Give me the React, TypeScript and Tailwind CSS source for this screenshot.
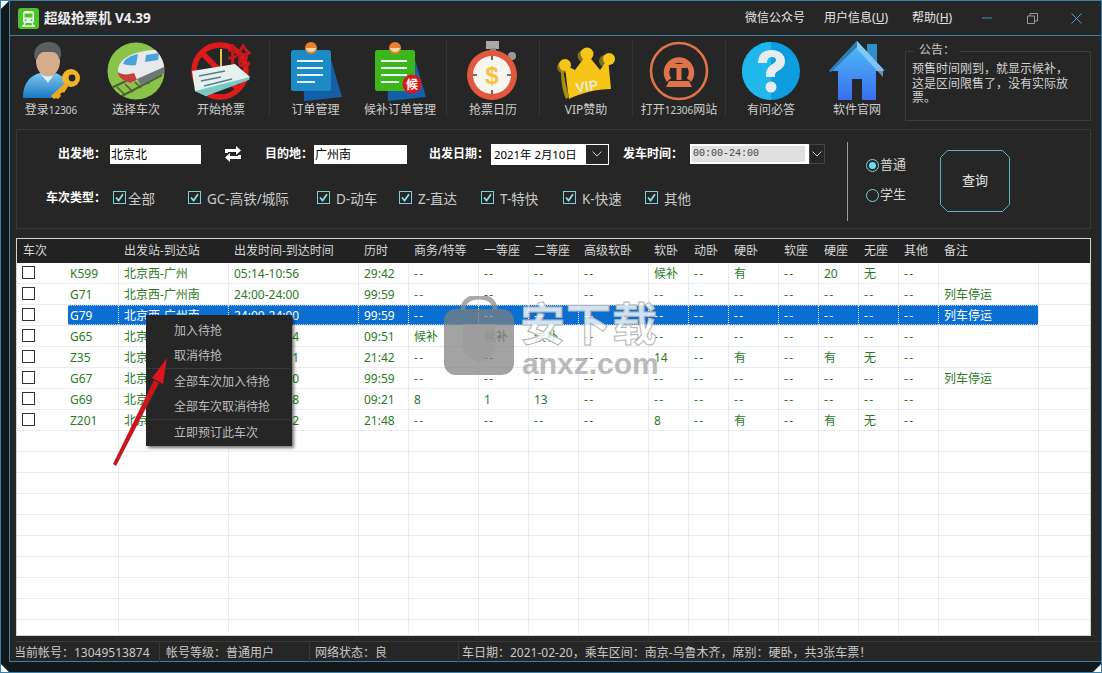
import { useId } from "react";

const cols = "grid grid-cols-[51px_50px_110px_130px_50px_70px_50px_50px_70px_40px_40px_50px_40px_40px_40px_40px_100px_52px]";

const headers = ["车次", "", "出发站-到达站", "出发时间-到达时间", "历时", "商务/特等", "一等座", "二等座", "高级软卧", "软卧", "动卧", "硬卧", "软座", "硬座", "无座", "其他", "备注", ""];

const d = "--";
const rows = [
  ["K599", "北京西-广州", "05:14-10:56", "29:42", d, d, d, d, "候补", d, "有", d, "20", "无", d, ""],
  ["G71", "北京西-广州南", "24:00-24:00", "99:59", d, d, d, d, d, d, d, d, d, d, d, "列车停运"],
  ["G79", "北京西-广州南", "24:00-24:00", "99:59", d, d, d, d, d, d, d, d, d, d, d, "列车停运"],
  ["G65", "北京西-广州南", "09:33-19:24", "09:51", "候补", "候补", "候补", d, d, d, d, d, d, d, d, ""],
  ["Z35", "北京西-广州", "11:49-09:31", "21:42", d, d, d, d, "14", d, "有", d, "有", "无", d, ""],
  ["G67", "北京西-广州南", "24:00-24:00", "99:59", d, d, d, d, d, d, d, d, d, d, d, "列车停运"],
  ["G69", "北京西-广州南", "10:07-19:28", "09:21", "8", "1", "13", d, d, d, d, d, d, d, d, ""],
  ["Z201", "北京西-广州", "13:54-11:42", "21:48", d, d, d, d, "8", d, "有", d, "有", "无", d, ""],
];

function Title() {
  return (
    <svg width="21" height="21" viewBox="0 0 21 21">
      <rect width="21" height="21" rx="3" fill="#4cc32c" />
      <rect x="5" y="3" width="11" height="12" rx="2.5" fill="#eef8e8" />
      <rect x="6.5" y="5.5" width="8" height="4" fill="#4cc32c" />
      <circle cx="7.5" cy="12.3" r="1" fill="#4cc32c" />
      <circle cx="13.5" cy="12.3" r="1" fill="#4cc32c" />
      <path d="M4 18h13M7 15l-1.5 3M14 15l1.5 3" stroke="#eef8e8" strokeWidth="1.4" fill="none" />
    </svg>
  );
}

function UserKey() {
  const id = useId();
  return (
    <svg width="60" height="60" viewBox="0 0 60 60">
      <defs>
        <linearGradient id={id} x1="0" y1="0" x2="0" y2="1">
          <stop offset="0" stopColor="#7cc8ee" />
          <stop offset="1" stopColor="#1a78c2" />
        </linearGradient>
      </defs>
      <path d="M2 57c0-14 6-22 17-25l8 6 8-6c5 2 8 5 11 9l-12 13-3 3H5z" fill={`url(#${id})`} />
      <path d="M19 32l8 10 7-10-2-3H21z" fill="#dff1fb" />
      <ellipse cx="27" cy="20" rx="12" ry="15.500" fill="#d3ad8c" />
      <path d="M14 18C11 7 19 1 28 1c8 0 13 5 12 14l-2 4c0-5-3-8-7-8H22c-3 1-5 3-6 7z" fill="#5b5f5f" />
      <circle cx="50" cy="37" r="9" fill="#f0b429" />
      <circle cx="51" cy="37" r="3.400" fill="#262626" />
      <path d="M44 42L30 55l3 3 2-1 2 1 3-3-1-2 3-2 1 1 5-8z" fill="#eaa91f" />
    </svg>
  );
}

function TrainIcon() {
  const id = useId();
  return (
    <svg width="60" height="60" viewBox="0 0 60 60">
      <defs>
        <clipPath id={id}>
          <circle cx="30" cy="30" r="28.500" />
        </clipPath>
      </defs>
      <circle cx="30" cy="30" r="28.500" fill="#8bc34a" />
      <g clipPath={`url(#${id})`}>
        <path d="M5 47L40 31M14 56l42-22" stroke="#4f5f35" strokeWidth="2" fill="none" />
        <path d="M11 46l8 8M19 43l8 8M27 39l8 8M35 35l8 8" stroke="#4f5f35" strokeWidth="1.600" />
        <path d="M12 30c0-9 8-15 18-18 9-3 21-4 30-3v18L34 38l-8 4c-8-2-14-6-14-12z" fill="#e7e9ea" />
        <path d="M12 31c3 3 11 3 16 1l3 7-6 3c-7-2-13-5-13-11z" fill="#c73f3a" />
        <path d="M19 19c3-3 8-5 13-6l-2 11c-4 1-9 0-13-1z" fill="#4aa3d8" />
        <path d="M40 14l13-2-1 7-13 2z" fill="#4aa3d8" />
        <path d="M31 38l29-13v6L35 44z" fill="#6f767a" />
      </g>
    </svg>
  );
}

function TicketIcon() {
  return (
    <svg width="60" height="60" viewBox="0 0 60 60">
      <circle cx="29" cy="30" r="26" fill="none" stroke="#e01a1a" strokeWidth="5.500" />
      <path d="M11 12l36 36" stroke="#e01a1a" strokeWidth="5.500" />
      <path d="M30 8v24h11" stroke="#e8c24a" strokeWidth="2" fill="none" />
      <text x="36" y="24" fontSize="24" fontWeight="700" fill="#c8161d" fontFamily="'Noto Sans CJK SC', sans-serif">抢</text>
      <path d="M1 30L44 23l15 13-44 19-11-5z" fill="#e6f1ef" />
      <path d="M4 50L59 36l-1 3-43 16z" fill="#79c8c4" />
      <path d="M8 35l26-5M10 40l20-4M13 45l28-7" stroke="#5a7d86" strokeWidth="1.500" />
    </svg>
  );
}

function NoteIcon({ green }: { green?: boolean }) {
  return (
    <svg width="54" height="60" viewBox="0 0 54 60">
      <path d="M14 20L40 12l13 44-38 4z" fill="#155fa8" />
      <rect x="2" y="9" width="40" height="41" rx="2.500" fill={green ? "#3fb51c" : "#1c8ac6"} />
      <circle cx="22" cy="7" r="6" fill="#e8802f" />
      <path d="M17 7a5 4 0 0 0 10 0" fill="#f4d9a6" />
      <path d="M8 20h26M8 27h26M8 34h26M8 41h18" stroke="#e6f4fb" strokeWidth="2" />
      {green && (
        <>
          <circle cx="39" cy="43" r="9.500" fill="#e0161c" />
          <text x="39" y="47.500" textAnchor="middle" fontSize="12" fontWeight="700" fill="#fff" fontFamily="'Noto Sans CJK SC', sans-serif">候</text>
        </>
      )}
    </svg>
  );
}

function WatchIcon() {
  return (
    <svg width="54" height="60" viewBox="0 0 54 60">
      <rect x="20" y="0" width="13" height="8" fill="#a9a9a9" />
      <rect x="24" y="7" width="6" height="5" fill="#8a8a8a" />
      <circle cx="46" cy="15" r="4" fill="#9a9a9a" />
      <circle cx="26" cy="34" r="25" fill="#e2583e" />
      <circle cx="26" cy="34" r="19" fill="#f7f5f0" />
      <path d="M26 15v4M26 49v4M7 34h4M41 34h4" stroke="#444" strokeWidth="1.600" />
      <text x="26" y="42.500" textAnchor="middle" fontSize="24" fontWeight="700" fill="#f4c23c" fontFamily="'Liberation Sans', sans-serif">$</text>
    </svg>
  );
}

function CrownIcon() {
  return (
    <svg width="60" height="60" viewBox="0 0 60 60">
      <g fill="#7d7020" transform="translate(-3 2)">
        <circle cx="10" cy="24" r="6" />
        <circle cx="31" cy="13" r="6.500" />
        <circle cx="52" cy="18" r="6" />
      </g>
      <path d="M9 24l10 5 12-16 13 16 8-11 3 30c-14 0-30 4-42 10-2-12-3-24-4-34z" fill="#f5c518" />
      <path d="M7 26c1 10 3 20 6 30l-3 2c-4-9-5-20-5-30z" fill="#a88f14" />
      <circle cx="9" cy="24" r="6" fill="#f5c518" />
      <circle cx="31" cy="13" r="6.500" fill="#f5c518" />
      <circle cx="53" cy="18" r="6" fill="#f5c518" />
      <text x="31" y="50" textAnchor="middle" fontSize="14" fontWeight="700" fill="#ece7d6" transform="rotate(-8 31 46)" fontFamily="'Liberation Sans', sans-serif">VIP</text>
    </svg>
  );
}

function RailIcon() {
  return (
    <svg width="60" height="60" viewBox="0 0 60 60">
      <circle cx="30" cy="30" r="28" fill="none" stroke="#e07349" strokeWidth="2.600" />
      <path d="M20 39a12.500 12.500 0 1 1 20 0" fill="none" stroke="#e07349" strokeWidth="5.500" />
      <path d="M22 23h16v4h-5.500v12h-5V27H22z" fill="#e07349" />
      <path d="M20 40h20l3 6H17z" fill="#e07349" />
    </svg>
  );
}

function HelpIcon() {
  return (
    <svg width="60" height="60" viewBox="0 0 60 60">
      <circle cx="30" cy="30" r="29" fill="#0d9ee0" />
      <path d="M30 1a29 29 0 0 0 0 58z" fill="#1fb8ea" />
      <path d="M17 22c0-9 6-13 14-13s13 5 13 11c0 5-3 8-7 10-3 2-3 3-3 6h-9c0-6 1-9 5-12 3-2 5-3 5-5s-2-3-4-3c-3 0-5 2-5 6z" fill="#e9ecef" />
      <circle cx="30" cy="46" r="5.500" fill="#e9ecef" />
    </svg>
  );
}

function HomeIcon() {
  const id = useId();
  return (
    <svg width="60" height="60" viewBox="0 0 60 60">
      <defs>
        <linearGradient id={id} x1="0" y1="0" x2="0" y2="1">
          <stop offset="0" stopColor="#4fc0f5" />
          <stop offset="1" stopColor="#3a6df0" />
        </linearGradient>
      </defs>
      <rect x="40" y="3" width="10" height="18" fill="#2f8fc7" />
      <path d="M30 0L2 30h9v29h14V38h10v21h14V30h9z" fill={`url(#${id})`} />
      <path d="M30 0L2 30l2 1L30 6z" fill="#2a7db5" />
      <path d="M30 0l26 28v8L30 8z" fill="#a7d9f5" opacity=".6" />
    </svg>
  );
}

const tools = [
  { label: <>登录<span className="text-[10px]">12306</span></>, icon: <UserKey />, w: "w-[82px]" },
  { label: "选择车次", icon: <TrainIcon />, w: "w-[88px]" },
  { label: "开始抢票", icon: <TicketIcon />, w: "w-[82px] mr-[7px]" },
  { label: "订单管理", icon: <NoteIcon />, w: "w-[91px]", sep: true },
  { label: "候补订单管理", icon: <NoteIcon green />, w: "w-[78px] mr-[7px]" },
  { label: "抢票日历", icon: <WatchIcon />, w: "w-[92px]", sep: true },
  { label: "VIP赞助", icon: <CrownIcon />, w: "w-[92px]", sep: true },
  { label: <>打开<span className="text-[10px]">12306</span>网站</>, icon: <RailIcon />, w: "w-[92px]", sep: true },
  { label: "有问必答", icon: <HelpIcon />, w: "w-[90px]", sep: true },
  { label: "软件官网", icon: <HomeIcon />, w: "w-[82px]" },
];

const types = [
  { label: "全部", w: "w-[75px]", gap: "gap-[2px]" },
  { label: "GC-高铁/城际", w: "w-[129px]", gap: "gap-[6px]" },
  { label: "D-动车", w: "w-[82px]", gap: "gap-[6px]" },
  { label: "Z-直达", w: "w-[82px]", gap: "gap-[6px]" },
  { label: "T-特快", w: "w-[82px]", gap: "gap-[6px]" },
  { label: "K-快速", w: "w-[82px]", gap: "gap-[6px]" },
  { label: "其他", w: "w-[60px]", gap: "gap-[6px]" },
];

function Check() {
  return (
    <svg width="13" height="13" viewBox="0 0 13 13" className="shrink-0">
      <rect x="0.5" y="0.5" width="12" height="12" fill="#262626" stroke="#7fd0d4" />
      <path d="M3 6.5l2.600 3L10 3.200" fill="none" stroke="#8fdde2" strokeWidth="1.800" />
    </svg>
  );
}

function Chevron() {
  return (
    <svg width="10" height="6" viewBox="0 0 10 6">
      <path d="M0.500 0.500L5 5l4.500-4.500" fill="none" stroke="#cfcfcf" />
    </svg>
  );
}

function Row({ data, selected }: { data?: string[]; selected?: boolean }) {
  const cells: string[] = data ? data : Array(16).fill("");
  return (
    <div className={`${cols} h-[21px] text-xs leading-[21px] border-b border-[#e9ebee]`}>
      <div className="flex items-start pl-[5px] pt-[3px]">
        {data && <span className="w-[13px] h-[13px] border border-[#333] bg-white" />}
      </div>
      {cells.map((c, i) => (
        <div
          key={i}
          className={`truncate ${i === 0 ? "pl-[2px]" : "pl-[5px] border-l"} ${c === d ? "tracking-[1.5px]" : ""} ${
            selected
              ? "bg-[#0a6fd0] text-white border-l-[#e8f0f8] border-y border-dotted border-y-[#a8cbee] leading-[19px]"
              : "text-[#2c7a1f] border-[#e9ebee]"
          }`}
        >
          {c}
        </div>
      ))}
      <div className="border-l border-[#e9ebee]" />
    </div>
  );
}

export default function App() {
  return (
    <div className="relative w-[1102px] h-[673px] overflow-hidden border border-[#3d7ea6] bg-[#13181b] font-['Noto_Sans','Noto_Sans_CJK_SC',sans-serif]">
      <div className="ml-[8px] mb-[9px] h-[661px] flex flex-col border-l border-b border-[#3d7ea6] bg-[#262626]">
        {/* Title bar */}
        <div className="h-[35px] shrink-0 flex items-center border-b border-[#3d7ea6] pl-[8px] text-[#e4e4e4]">
          <Title />
          <span className="ml-[5px] w-[106px] whitespace-nowrap text-[13.5px] font-bold text-[#eeeeee]">超级抢票机 V4.39</span>
          <span className="ml-[595px] text-xs">微信公众号</span>
          <span className="ml-[19px] text-xs">
            用户信息(<span className="underline">U</span>)
          </span>
          <span className="ml-[24px] text-xs">
            帮助(<span className="underline">H</span>)
          </span>
          <svg width="10" height="10" viewBox="0 0 10 10" className="ml-[30px]">
            <path d="M0 5h10" stroke="#4f8fae" />
          </svg>
          <svg width="11" height="11" viewBox="0 0 11 11" className="ml-[35px]">
            <path d="M0.500 3h7v7.500h-7zM3 3V0.500h7.500V8H7.500" fill="none" stroke="#9a9a9a" />
          </svg>
          <svg width="11" height="11" viewBox="0 0 11 11" className="ml-[33px]">
            <path d="M0.500 0.500l10 10M10.500 0.500l-10 10" stroke="#5d9abb" />
          </svg>
        </div>

        {/* Toolbar */}
        <div className="h-[93px] shrink-0 flex items-start">
          {tools.map((t, i) => (
            <div key={i} className="flex items-start">
              {t.sep && <div className="w-px h-[77px] mt-[4px] bg-[#343434]" />}
              <div className={`${t.w} flex flex-col items-center pt-[5px]`}>
                <div className="h-[60px] flex items-center justify-center">{t.icon}</div>
                <span className="mt-[2px] text-xs leading-[14px] text-[#cdcdcd] whitespace-nowrap">{t.label}</span>
              </div>
            </div>
          ))}
          <div className="relative ml-[7px] mt-[15px] w-[186px] h-[70px] border border-[#3c3c3c] pl-[6px] pt-[10px] text-xs leading-[14.5px] text-[#d2d2d2] whitespace-nowrap">
            <span className="absolute left-[8px] -top-[9px] bg-[#262626] px-[5px] text-[#c8c8c8]">公告：</span>
            预售时间刚到，就显示候补，
            <br />
            这是区间限售了，没有实际放
            <br />
            票。
          </div>
        </div>

        {/* Search panel */}
        <div className="ml-[6px] w-[1075px] h-[100px] shrink-0 flex border border-[#3a3a3a]">
          <div className="w-[830px] shrink-0 pt-[14px] text-xs">
            <div className="flex items-center h-[20px]">
              <span className="ml-[41px] w-[52px] font-bold text-white">出发地：</span>
              <span className="w-[91px] h-[19px] bg-white text-black leading-[19px] pl-[1px]">北京北</span>
              <svg width="20" height="20" viewBox="0 0 20 20" className="ml-[22px]">
                <path d="M2 9V5h11V2l5 4.500-5 4.500V8H5v1zM18 11v4H7v3l-5-4.500L7 9v3h8v-1z" fill="#fff" />
              </svg>
              <span className="ml-[22px] w-[49px] font-bold text-white whitespace-nowrap">目的地：</span>
              <span className="w-[93px] h-[19px] bg-white text-black leading-[19px] pl-[1px]">广州南</span>
              <span className="ml-[22px] w-[62px] font-bold text-white whitespace-nowrap">出发日期：</span>
              <div className="w-[118px] h-[21px] flex border border-white">
                <span className="flex-1 bg-white text-black text-[11.4px] leading-[19px] pl-[2px] whitespace-nowrap">2021年 2月10日</span>
                <span className="w-[22px] flex items-center justify-center">
                  <Chevron />
                </span>
              </div>
              <span className="ml-[14px] w-[67px] font-bold text-white whitespace-nowrap">发车时间：</span>
              <div className="w-[135px] h-[20px] flex">
                <div className="w-[119px] bg-white p-[2px] pr-[4px]">
                  <div className="h-full bg-[#e0e0e0] text-[#444] text-[10px] leading-[16px] pl-[1px] font-['Liberation_Mono',monospace]">00:00-24:00</div>
                </div>
                <span className="flex-1 flex items-center justify-center border border-[#444]">
                  <Chevron />
                </span>
              </div>
            </div>
            <div className="flex items-center h-[20px] mt-[24px]">
              <span className="ml-[29px] w-[67px] font-bold text-white whitespace-nowrap">车次类型：</span>
              {types.map((t) => (
                <div key={t.label} className={`${t.w} ${t.gap} flex items-center text-[13.5px] text-[#c9c9c9]`}>
                  <Check />
                  <span className="whitespace-nowrap mt-[2px]">{t.label}</span>
                </div>
              ))}
            </div>
          </div>
          <div className="w-px h-[79px] mt-[12px] bg-[#9a9a9a]" />
          <div className="ml-[18px] w-[74px] pt-[27px] flex flex-col gap-[14px] text-[13px] text-[#d8d8d8]">
            <div className="h-[16px] flex items-center gap-px">
              <span className="w-[13px] h-[13px] rounded-full border border-[#7fd0d4] flex items-center justify-center">
                <span className="w-[7px] h-[7px] rounded-full bg-[#6fdcf2]" />
              </span>
              普通
            </div>
            <div className="h-[16px] flex items-center gap-px">
              <span className="w-[13px] h-[13px] rounded-full border border-[#7fd0d4]" />
              学生
            </div>
          </div>
          <div className="relative mt-[20px] w-[70px] h-[62px] flex items-center justify-center text-[13px] text-[#e6e6e6]">
            <svg width="70" height="62" viewBox="0 0 70 62" className="absolute inset-0">
              <path d="M7.500 0.500h55l7 7v47l-7 7h-55l-7-7v-47z" fill="none" stroke="#5fb5ba" />
            </svg>
            查询
          </div>
        </div>

        {/* Train table */}
        <div className="relative ml-[6px] mt-[9px] w-[1075px] h-[398px] shrink-0 overflow-hidden border border-[#d4d4d4] bg-white">
          <div className={`${cols} h-[24px] bg-[#222222] text-xs leading-[24px] text-[#d6d6d6]`}>
            {headers.map((h, i) => (
              <div key={i} className="whitespace-nowrap pl-[6px]">
                {h}
              </div>
            ))}
          </div>
          {rows.map((r, i) => (
            <Row key={i} data={r} selected={i === 2} />
          ))}
          {Array.from({ length: 10 }).map((_, i) => (
            <Row key={i} />
          ))}
        </div>

        {/* Status bar */}
        <div className="ml-[6px] mt-[5px] h-[21px] flex text-xs leading-[21px] text-[#c8c8c8] border-t border-[#3a3a3a]">
          <div className="w-[144px] overflow-hidden whitespace-nowrap border-r border-[#3a3a3a]">
            <span className="-ml-[2px] inline-block">当前帐号：13049513874</span>
          </div>
          <div className="w-[150px] pl-[6px] whitespace-nowrap border-r border-[#3a3a3a]">帐号等级：普通用户</div>
          <div className="w-[149px] pl-[5px] whitespace-nowrap border-r border-[#3a3a3a]">网络状态：良</div>
          <div className="flex-1 overflow-hidden whitespace-nowrap pl-[3px]">
            <span className="inline-block">车日期：2021-02-20，乘车区间：南京-乌鲁木齐，席别：硬卧，共3张车票！</span>
          </div>
        </div>
      </div>

      {/* Context menu */}
      <div className="absolute left-[145px] top-[314px] w-[146px] h-[131px] bg-[#262626] shadow-[2px_2px_3px_rgba(0,0,0,0.55)] text-xs text-[#bdbdbd] pl-[28px] pt-[3px]">
        <div className="h-[25px] leading-[25px]">加入待抢</div>
        <div className="h-[25px] leading-[25px]">取消待抢</div>
        <div className="-ml-[26px] w-[142px] h-px bg-[#3a3a3a]" />
        <div className="h-[25px] leading-[25px]">全部车次加入待抢</div>
        <div className="h-[25px] leading-[25px]">全部车次取消待抢</div>
        <div className="-ml-[26px] w-[142px] h-px bg-[#3a3a3a]" />
        <div className="h-[25px] leading-[25px]">立即预订此车次</div>
      </div>

      {/* Red annotation arrow */}
      <svg width="70" height="120" viewBox="0 0 70 120" className="absolute left-[105px] top-[355px]">
        <path d="M7 108L10 110 53 27 48 24z" fill="#c8161d" />
        <path d="M61 2L46 22l11 6z" fill="#e0141c" />
      </svg>

      {/* Site watermark */}
      <div className="absolute left-[442px] top-[295px] w-[72px] h-[80px]">
        <svg width="72" height="80" viewBox="0 0 72 80">
          <path d="M20 14C20 4 28 1 36 1s16 3 16 13" fill="none" stroke="#8c8c8c" strokeOpacity=".75" strokeWidth="5" />
          <rect x="1" y="13" width="70" height="66" rx="12" fill="#808080" fillOpacity=".72" />
          <path d="M20 28h32v22c0 8-9 13-16 16-7-3-16-8-16-16z" fill="#9a9a9a" fillOpacity=".7" />
        </svg>
      </div>
      <div className="absolute left-[519px] top-[296px] text-[45px] leading-[54px] font-bold tracking-[1px] text-white/80 [-webkit-text-stroke:1px_#b4b4b4] whitespace-nowrap">
        安下载
      </div>
      <div className="absolute left-[521px] top-[345px] text-[30px] leading-[36px] font-bold font-['Liberation_Sans',sans-serif] text-[#a4a4a4]/75 whitespace-nowrap">
        anxz.com
      </div>

      {/* Window corner cuts */}
      <svg width="10" height="10" viewBox="0 0 10 10" className="absolute -left-px -top-px">
        <path d="M0 0h10L0 10z" fill="#ffffff" />
        <path d="M10 0L0 10" stroke="#3d7ea6" />
      </svg>
      <svg width="10" height="10" viewBox="0 0 10 10" className="absolute -left-px -bottom-px">
        <path d="M0 10V0l10 10z" fill="#ffffff" />
        <path d="M0 0l10 10" stroke="#3d7ea6" />
      </svg>
      <svg width="10" height="10" viewBox="0 0 10 10" className="absolute -right-px -bottom-px">
        <path d="M10 10H0L10 0z" fill="#ffffff" />
        <path d="M0 10L10 0" stroke="#3d7ea6" />
      </svg>
    </div>
  );
}
